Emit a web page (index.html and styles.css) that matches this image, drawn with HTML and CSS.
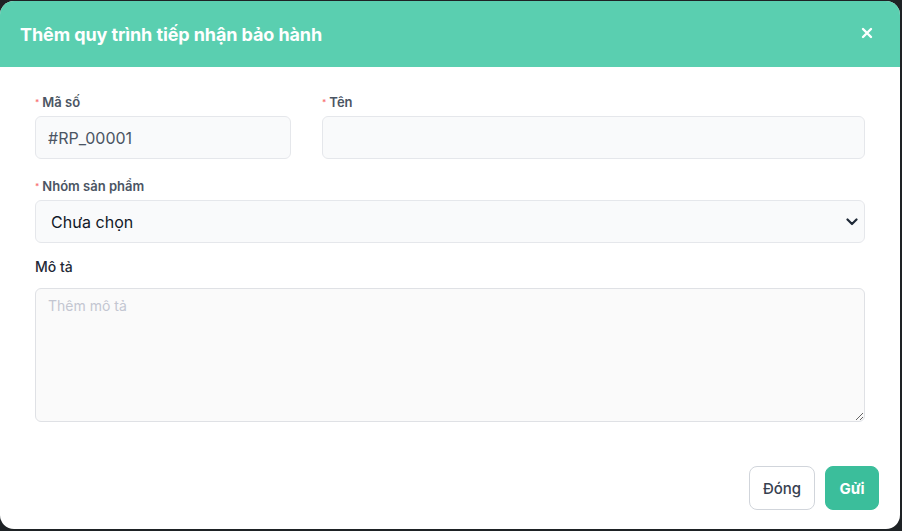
FILE: index.html
```html
<!DOCTYPE html>
<html lang="vi">
<head>
<meta charset="utf-8">
<title>Thêm quy trình tiếp nhận bảo hành</title>
<link rel="stylesheet" href="styles.css">
</head>
<body>
<div class="modal">
  <div class="modal-header">
    <h2 class="modal-title">Thêm quy trình tiếp nhận bảo hành</h2>
    <button class="close-btn" aria-label="Đóng">
      <svg width="12" height="12" viewBox="0 0 12 12"><path d="M2 2L10 10M10 2L2 10" stroke="#fff" stroke-width="2.4" stroke-linecap="round"/></svg>
    </button>
  </div>
  <div class="modal-body">
    <div class="row-two">
      <div class="field">
        <label class="label req">Mã số</label>
        <input class="input code" type="text" value="#RP_00001">
      </div>
      <div class="field">
        <label class="label req">Tên</label>
        <input class="input" type="text" value="">
      </div>
    </div>
    <div class="field">
      <label class="label req">Nhóm sản phẩm</label>
      <div class="select-wrap">
        <select class="input select">
          <option>Chưa chọn</option>
        </select>
        <svg class="chevron" width="12" height="8" viewBox="0 0 12 8"><path d="M1.5 1.5L6 6L10.5 1.5" fill="none" stroke="#1f2937" stroke-width="2.2" stroke-linecap="round" stroke-linejoin="round"/></svg>
      </div>
    </div>
    <div class="field desc">
      <label class="label plain">Mô tả</label>
      <textarea class="input textarea" placeholder="Thêm mô tả"></textarea>
    </div>
  </div>
  <div class="modal-footer">
    <button class="btn btn-light">Đóng</button>
    <button class="btn btn-primary">Gửi</button>
  </div>
</div>
</body>
</html>
```
FILE: styles.css
```css
* { box-sizing: border-box; }
html, body { margin: 0; padding: 0; }
body {
  background: #1e2225;
  font-family: Inter, "Noto Sans", "Liberation Sans", sans-serif;
  padding-top: 1px;
}
.modal {
  width: 900px;
  height: 528px;
  background: #fff;
  border-radius: 14px;
  overflow: hidden;
  display: flex;
  flex-direction: column;
}
.modal-header {
  height: 66px;
  background: #5acfb0;
  display: flex;
  align-items: center;
  justify-content: space-between;
  padding: 0 26px 0 20px;
}
.modal-title {
  margin: 0;
  color: #fff;
  font-size: 18px;
  font-weight: 700;
  letter-spacing: -0.1px;
}
.close-btn {
  border: 0;
  background: transparent;
  padding: 0;
  width: 14px;
  height: 14px;
  display: flex;
  align-items: center;
  justify-content: center;
  cursor: pointer;
  margin-top: -2px;
}
.modal-body {
  padding: 26px 35px 0 35px;
  display: flex;
  flex-direction: column;
  gap: 18px;
}
.row-two {
  display: grid;
  grid-template-columns: 256px 1fr;
  gap: 31px;
}
.field {
  display: flex;
  flex-direction: column;
}
.field.desc { margin-top: -3px; }
.label {
  display: block;
  height: 18px;
  font-size: 13px;
  font-weight: 600;
  color: #4b5563;
  line-height: 18px;
  margin-bottom: 5px;
}
.label.req::before {
  content: "*";
  color: #f87171;
  font-size: 8px;
  margin-right: 3px;
  vertical-align: 2px;
}
.label.plain {
  font-size: 14px;
  font-weight: 500;
  color: #1f2937;
  margin-bottom: 12px;
}
.input {
  height: 43px;
  width: 100%;
  border: 1px solid #e5e7eb;
  border-radius: 6px;
  background: #f9fafb;
  padding: 0 12px;
  font-family: inherit;
  font-size: 16px;
  color: #111827;
  outline: none;
}
.input.code { color: #4b5563; }
.select-wrap { position: relative; }
.select {
  appearance: none;
  -webkit-appearance: none;
  padding-left: 15px;
  color: #111827;
}
.chevron {
  position: absolute;
  right: 7px;
  top: 18px;
  pointer-events: none;
}
.textarea {
  height: 134px;
  resize: vertical;
  padding: 8px 12px;
  font-size: 14px;
  background: #fafafa;
  border-color: #dfe1e5;
}
.textarea::placeholder { color: #c3c6d1; }
.modal-footer {
  margin-top: auto;
  display: flex;
  justify-content: flex-end;
  gap: 10px;
  padding: 0 21px 19px 0;
}
.btn {
  height: 44px;
  border-radius: 8px;
  font-family: inherit;
  font-size: 15px;
  cursor: pointer;
}
.btn-light {
  width: 66px;
  background: #fff;
  border: 1px solid #d1d5db;
  color: #374151;
  font-weight: 500;
}
.btn-primary {
  width: 54px;
  background: #3bbe9b;
  border: 1px solid #3bbe9b;
  color: #fff;
  font-weight: 700;
}
```
